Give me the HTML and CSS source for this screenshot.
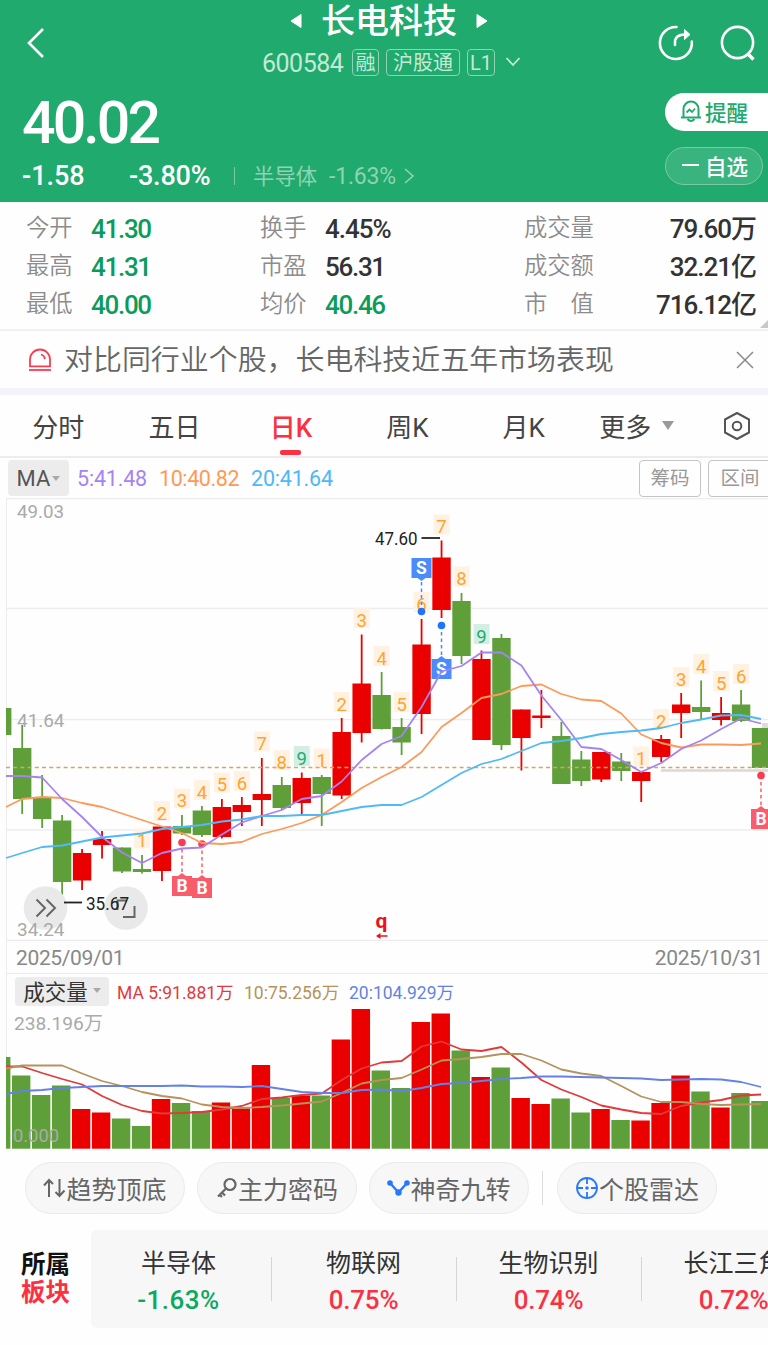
FILE: index.html
```html
<!DOCTYPE html>
<html lang="zh-CN">
<head>
    <meta charset="UTF-8">
    <meta name="viewport" content="width=device-width, initial-scale=1.0">
    <title>长电科技 600584</title>
    <link rel="stylesheet" href="styles.css">
</head>
<body>
    <header class="header">
        <div class="topbar">
            <svg class="back" width="20" height="34" viewBox="0 0 20 34"><path d="M17 3 L3 17 L17 31" fill="none" stroke="#fff" stroke-width="2.6"/></svg>
            <div class="stock">
                <div class="stock-name">
                    <svg width="12" height="16" viewBox="0 0 12 16"><path d="M11 1.5 V14.5 L1 8 Z" fill="#fff" stroke="#fff" stroke-linejoin="round"/></svg>
                    <h1>长电科技</h1>
                    <svg width="12" height="16" viewBox="0 0 12 16"><path d="M1 1.5 V14.5 L11 8 Z" fill="#fff" stroke="#fff" stroke-linejoin="round"/></svg>
                </div>
                <div class="stock-code">
                    <span class="code">600584</span>
                    <span class="tag">融</span>
                    <span class="tag tag-wide">沪股通</span>
                    <span class="tag tag-l1">L1</span>
                    <svg width="16" height="12" viewBox="0 0 16 12"><path d="M1.5 2 L8 9 L14.5 2" fill="none" stroke="#c5e9d7" stroke-width="1.8"/></svg>
                </div>
            </div>
            <svg class="icon-share" width="40" height="40" viewBox="0 0 40 40" fill="none" stroke="#fff" stroke-width="2.6">
                <path d="M20.5 4 A16 16 0 1 0 35.8 18.5" stroke-linecap="round"/>
                <path d="M19 22 V19.5 Q19 11.5 29 11.5" stroke-linecap="round"/>
                <path d="M28.5 6.5 L34 11.5 L28.5 16.5 Z" fill="#fff" stroke-width="1"/>
            </svg>
            <svg class="icon-search" width="40" height="40" viewBox="0 0 40 40" fill="none" stroke="#fff" stroke-width="2.6">
                <circle cx="19.5" cy="19.5" r="15.6"/>
                <path d="M29.5 30.5 L35.5 36.5" stroke-width="3.4"/>
            </svg>
        </div>
        <div class="quote">
            <div>
                <div class="price">40.02</div>
                <div class="change">
                    <span class="diff">-1.58</span>
                    <span class="percent">-3.80%</span>
                    <span class="line"></span>
                    <span class="sector">半导体</span>
                    <span class="sector-rate">-1.63%</span>
                    <svg width="12" height="18" viewBox="0 0 12 18"><path d="M2 2 L10 9 L2 16" fill="none" stroke="#8fd3b3" stroke-width="1.6"/></svg>
                </div>
            </div>
            <div class="actions">
                <a class="btn btn-alert">
                    <svg width="22" height="24" viewBox="0 0 22 24" fill="none" stroke="#20aa6d" stroke-width="2">
                        <path d="M3.5 18 V10 A7.5 7.5 0 0 1 18.5 10 V18"/>
                        <path d="M1 18.5 H21"/>
                        <path d="M7.5 20 Q11 24 14.5 20"/>
                        <path d="M6.5 13.5 L9.5 10.5 L12 13 L15 9.5" stroke-width="1.8"/>
                    </svg>
                    提醒
                </a>
                <a class="btn btn-fav"><span class="minus"></span>自选</a>
            </div>
        </div>
    </header>

    <section class="stats">
        <span class="label">今开</span><span class="value down">41.30</span>
        <span class="label">换手</span><span class="value">4.45%</span>
        <span class="label">成交量</span><span class="value right">79.60万</span>
        <span class="label">最高</span><span class="value down">41.31</span>
        <span class="label">市盈</span><span class="value">56.31</span>
        <span class="label">成交额</span><span class="value right">32.21亿</span>
        <span class="label">最低</span><span class="value down">40.00</span>
        <span class="label">均价</span><span class="value down">40.46</span>
        <span class="label">市　值</span><span class="value right">716.12亿</span>
        <i class="corner"></i>
    </section>

    <section class="notice">
        <svg width="24" height="24" viewBox="0 0 24 24" fill="none" stroke="#fb3c50" stroke-width="1.8">
            <path d="M2 18.3 V11.5 A10 10 0 0 1 22 11.5 V18.3 Z"/>
            <path d="M1 22 H23"/>
            <path d="M13 6.5 Q16.5 7.5 17 11"/>
        </svg>
        <p>对比同行业个股，长电科技近五年市场表现</p>
        <svg class="close" width="18" height="18" viewBox="0 0 18 18"><path d="M1 1 L17 17 M17 1 L1 17" stroke="#888" stroke-width="1.5"/></svg>
    </section>

    <nav class="tabs">
        <a>分时</a>
        <a>五日</a>
        <a class="active">日K</a>
        <a>周K</a>
        <a>月K</a>
        <a>更多<i class="caret"></i></a>
        <svg width="28" height="30" viewBox="0 0 28 30" fill="none" stroke="#555" stroke-width="2">
            <path d="M14 2 L26 8.5 V21.5 L14 28 L2 21.5 V8.5 Z" stroke-linejoin="round"/>
            <circle cx="14" cy="15" r="4.3"/>
        </svg>
    </nav>

    <div class="ma-bar">
        <span class="select">MA<i class="caret small"></i></span>
        <span class="ma5">5:41.48</span>
        <span class="ma10">10:40.82</span>
        <span class="ma20">20:41.64</span>
        <span class="tool">筹码</span>
        <span class="tool last">区间</span>
    </div>
    <svg id="kline" class="chart" width="768" height="443" viewBox="0 497 768 443"></svg>
    <div class="dates"><span>2025/09/01</span><span>2025/10/31</span></div>

    <div class="vol-bar">
        <span class="select">成交量<i class="caret small"></i></span>
        <span class="vol5">MA 5:91.881万</span>
        <span class="vol10">10:75.256万</span>
        <span class="vol20">20:104.929万</span>
    </div>
    <svg id="volume" class="chart" width="768" height="142" viewBox="0 1007 768 142"></svg>

    <div class="tools">
        <a class="pill">
            <svg width="23" height="20" viewBox="0 0 23 20" fill="none" stroke="#666" stroke-width="2"><path d="M6 19 V2 M1 7.5 L6 2 L10 6 M16.5 1 V18 M12.5 14 L16.5 18 L21.5 12.5"/></svg>趋势顶底
        </a>
        <a class="pill">
            <svg width="22" height="22" viewBox="0 0 22 22" fill="none" stroke="#666" stroke-width="2.2"><circle cx="14" cy="7.5" r="5.5"/><path d="M10 11.5 L2 19.5 M6 15.5 L9 18.5 M3 17 L6 20"/></svg>主力密码
        </a>
        <a class="pill">
            <svg width="23" height="20" viewBox="0 0 23 20" fill="none" stroke="#2878ff" stroke-width="2.4"><path d="M3 5 L11.5 14.5 L20 5"/><g fill="#2878ff" stroke="none"><circle cx="3" cy="5" r="2.8"/><circle cx="11.5" cy="14.5" r="3.2"/><circle cx="20" cy="5" r="2.8"/></g></svg>神奇九转
        </a>
        <span class="split"></span>
        <a class="pill">
            <svg width="24" height="24" viewBox="0 0 24 24" fill="none" stroke="#2878ff" stroke-width="1.8"><circle cx="12" cy="12" r="10"/><path d="M12 2 V8 M12 16 V22 M2 12 H8 M16 12 H22"/><circle cx="12" cy="12" r="1.8" fill="#2878ff" stroke="none"/></svg>个股雷达
        </a>
    </div>

    <section class="boards">
        <h2>所属<em>板块</em></h2>
        <div class="board-list">
            <div class="board"><span>半导体</span><b class="green">-1.63%</b></div>
            <div class="board"><span>物联网</span><b>0.75%</b></div>
            <div class="board"><span>生物识别</span><b>0.74%</b></div>
            <div class="board"><span>长江三角</span><b>0.72%</b></div>
        </div>
    </section>

    <script src="chart.js"></script>
</body>
</html>
```

FILE: styles.css
```css
* {
    box-sizing: border-box;
}
body {
    margin: 0;
    width: 768px;
    height: 1345px;
    overflow: hidden;
    background: #fefefe;
    color: #333;
    font-family: Roboto, "Noto Sans CJK SC", sans-serif;
}
i, em {
    font-style: normal;
}
svg {
    flex: none;
}

/* header */
.header {
    height: 202px;
    background: #20aa6d;
    color: #fff;
}
.topbar {
    display: flex;
    height: 84px;
}
.back {
    margin: 26px 0 0 26px;
}
.stock {
    width: 260px;
    margin-left: 216px;
}
.stock-name {
    display: flex;
    align-items: center;
    justify-content: center;
    height: 42px;
    gap: 19px;
    padding-right: 6px;
}
.stock-name h1 {
    margin: 0;
    font-size: 34px;
    font-weight: 500;
    line-height: 44px;
}
.stock-code {
    display: flex;
    align-items: center;
    height: 40px;
    color: #c5e9d7;
}
.code {
    width: 90px;
    padding-top: 3px;
    font-size: 25px;
    letter-spacing: -0.5px;
}
.tag {
    width: 27px;
    height: 27px;
    margin-right: 7px;
    border: 1.5px solid #8fd3b3;
    border-radius: 4px;
    font-size: 20px;
    line-height: 26px;
    text-align: center;
}
.tag-wide {
    width: 74px;
}
.tag-l1 {
    width: 28px;
    margin-right: 10px;
}
.icon-share {
    margin: 23px 0 0 134px;
}
.icon-search {
    margin: 23px 0 0 22px;
}
.quote {
    display: flex;
    justify-content: space-between;
    height: 118px;
}
.price {
    height: 76px;
    padding-left: 22px;
    font-size: 59px;
    font-weight: 500;
    line-height: 78px;
    letter-spacing: -2.9px;
}
.change {
    display: flex;
    align-items: center;
    height: 32px;
    padding-left: 22px;
    font-size: 27px;
    font-weight: 500;
}
.diff {
    width: 107px;
}
.percent {
    width: 105px;
    letter-spacing: -0.2px;
}
.line {
    width: 1px;
    height: 18px;
    margin-right: 18px;
    background: #79caa5;
}
.sector {
    width: 76px;
    padding-bottom: 4px;
    color: #8fd3b3;
    font-size: 21.4px;
    font-weight: 400;
}
.sector-rate {
    width: 74px;
    color: #8fd3b3;
    font-size: 23px;
    font-weight: 400;
    letter-spacing: -0.2px;
}
.actions {
    width: 103px;
    padding-top: 9px;
}
.btn {
    display: flex;
    align-items: center;
    height: 38px;
    padding-bottom: 2px;
    font-size: 21.5px;
    font-weight: 500;
}
.btn-alert {
    padding-left: 15px;
    gap: 3px;
    border-radius: 19px 0 0 19px;
    background: #fff;
    color: #20aa6d;
}
.btn-fav {
    width: 98px;
    margin-top: 16px;
    padding-left: 16px;
    border: 1.5px solid #79caa5;
    border-radius: 19px;
    background: #3ab47e;
}
.minus {
    width: 17px;
    height: 2px;
    margin-right: 6px;
    background: #fff;
}

/* numbers */
.stats {
    position: relative;
    display: grid;
    grid-template-columns: 65px 169px 65px 199px 65px 167px;
    grid-auto-rows: 38px;
    height: 129px;
    padding: 7px 12px 0 26px;
    border-bottom: 2px solid #f1f1f3;
}
.label {
    color: #8c8c8c;
    font-size: 23.3px;
    font-weight: 350;
    white-space: nowrap;
    line-height: 38px;
}
.value {
    font-size: 26px;
    font-weight: 500;
    letter-spacing: -1.3px;
    line-height: 40px;
    white-space: nowrap;
}
.value:nth-child(4) {
    letter-spacing: -1px;
}
.value.right {
    letter-spacing: -1px;
    text-align: right;
}
.down {
    color: #0b9b5a;
}
.corner {
    position: absolute;
    right: 0;
    bottom: 1px;
    border-bottom: 8px solid #c8c8c8;
    border-left: 8px solid transparent;
}

.notice {
    display: flex;
    align-items: center;
    height: 64px;
    padding: 0 14px 0 28px;
    border-bottom: 7px solid #f3f3f9;
}
.notice p {
    margin: 0 auto 0 12px;
    padding-top: 1px;
    color: #666;
    font-size: 28.95px;
    font-weight: 350;
    line-height: 50px;
}

/* tabs */
.tabs {
    display: flex;
    align-items: center;
    height: 63px;
    border-bottom: 2px solid #ececee;
}
.tabs a {
    position: relative;
    display: flex;
    align-items: center;
    justify-content: center;
    width: 116.4px;
    height: 62px;
    padding-bottom: 1px;
    color: #444;
    font-size: 26px;
}
.tabs a.active {
    color: #fb3142;
    font-weight: 500;
}
.tabs a.active::after {
    content: "";
    position: absolute;
    bottom: 2px;
    width: 21px;
    height: 5px;
    border-radius: 2px;
    background: #fb3142;
}
.tabs > svg {
    margin-left: 25px;
}
.tabs a:nth-child(6) {
    padding-right: 7px;
}
.caret {
    margin-left: 11px;
    border: 6.5px solid transparent;
    border-top: 9px solid #999;
    border-bottom: 0;
}
.caret.small {
    margin-left: 2px;
    border-width: 4.5px;
    border-top: 5.5px solid #aaa;
    border-bottom: 0;
}

.ma-bar {
    display: flex;
    align-items: center;
    height: 40px;
    padding-left: 8px;
    font-size: 21.5px;
    white-space: nowrap;
}
.select {
    display: flex;
    align-items: center;
    justify-content: center;
    border-radius: 4px;
    background: #ececec;
    color: #555;
}
.ma-bar .select {
    width: 61px;
    height: 36px;
    margin-right: 8px;
    font-size: 22px;
}
.ma5 {
    width: 82px;
    color: #a584f2;
    letter-spacing: -0.2px;
}
.ma10 {
    width: 92px;
    color: #ff9a55;
    letter-spacing: -0.4px;
}
.ma20 {
    color: #4db8fa;
    letter-spacing: -0.2px;
}
.tool {
    flex: none;
    width: 62px;
    height: 37px;
    margin-left: auto;
    border: 1.5px solid #c4c4c4;
    border-radius: 4px;
    color: #999;
    font-size: 19.5px;
    line-height: 35px;
    text-align: center;
}
.tool.last {
    width: 64px;
    margin: 0 -4px 0 7px;
}

.chart {
    display: block;
}
.dates {
    display: flex;
    justify-content: space-between;
    height: 33px;
    margin-left: 6px;
    padding: 0 5px 0 9px;
    border-left: 1px solid #ececec;
    border-bottom: 1px solid #ececec;
    color: #888;
    font-size: 21px;
    letter-spacing: -0.35px;
    line-height: 34px;
}
.vol-bar {
    display: flex;
    align-items: center;
    height: 34px;
    margin-left: 6px;
    padding-left: 8px;
    border-left: 1px solid #ececec;
    font-size: 17.5px;
    white-space: nowrap;
}
.vol-bar .select {
    width: 94px;
    height: 29px;
    margin-right: 8px;
    padding-bottom: 2px;
    color: #333;
    font-size: 21.5px;
}
.vol-bar .caret {
    margin-left: 5px;
}
.vol5 {
    width: 127px;
    color: #e4393c;
}
.vol10 {
    width: 105px;
    color: #b5935b;
}
.vol20 {
    color: #6482e6;
}

/* bottom */
.tools {
    display: flex;
    height: 80px;
    padding: 12px 0 0 25px;
}
.pill {
    display: flex;
    align-items: center;
    justify-content: center;
    width: 160px;
    height: 52px;
    margin-right: 12px;
    border: 1px solid #ebebeb;
    border-radius: 26px;
    background: #f7f7f7;
    color: #666;
    font-size: 25px;
    white-space: nowrap;
}
.split {
    width: 1px;
    height: 34px;
    margin: 9px 14px 0 1px;
    background: #ddd;
}
.boards {
    display: flex;
    height: 98px;
}
.boards h2 {
    flex: none;
    width: 91px;
    margin: 0;
    padding: 21px 0 0 21px;
    color: #111;
    font-size: 24.5px;
    line-height: 28px;
}
.boards em {
    display: block;
    color: #fb3142;
}
.board-list {
    display: flex;
    flex: none;
    width: 677px;
    overflow: hidden;
    border-radius: 6px 0 0 6px;
    background: #f7f7f7;
}
.board {
    position: relative;
    display: flex;
    flex-direction: column;
    align-items: center;
    flex: none;
    width: 185px;
    padding-top: 15px;
    font-size: 25px;
    line-height: 37px;
    color: #333;
}
.board:first-child {
    width: 180px;
    padding-right: 5px;
}
.board + .board::before {
    content: "";
    position: absolute;
    left: 0;
    top: 27px;
    width: 1px;
    height: 44px;
    background: #d5d5d5;
}
.board b {
    color: #fb3142;
    font-size: 26px;
    font-weight: 500;
    letter-spacing: -0.2px;
}
.board b.green {
    color: #0aa960;
    letter-spacing: 0.5px;
}
```

FILE: chart.js
```js
const NS = "http://www.w3.org/2000/svg";
const RED = "#eb0000";
const GREEN = "#5f9f39";

// high, body top, body bottom, low, color
const candles = [
    [707, 707, 734, 734, "g"], [724, 747, 798, 813, "g"], [774, 797, 818, 827, "g"],
    [814, 819.5, 881, 897, "g"], [848, 852, 879.5, 889, "r"], [830, 838, 844, 857.5, "r"],
    [846.5, 846.5, 870.5, 872, "g"], [854, 868, 871, 872.5, "g"], [825, 825.5, 870, 880, "r"],
    [814, 825, 832.5, 834, "g"], [805, 809.5, 834, 836, "g"], [798, 806, 836, 837.5, "r"],
    [796, 804, 811, 825, "r"], [757, 793, 799, 825, "r"], [776, 784, 807, 809, "g"],
    [771.5, 777, 802, 813, "r"], [774, 776, 793, 825, "g"], [717, 731, 794.5, 798, "r"],
    [633.5, 682.5, 732, 741.5, "r"], [671, 694, 728, 728.5, "g"], [717, 726, 741.5, 754, "g"],
    [618, 643.5, 713, 733, "r"], [539.5, 556.5, 609, 617, "r"], [592, 600, 655, 663, "g"],
    [649.5, 658, 739, 739, "r"], [633, 637, 744, 749, "g"], [708.5, 708.5, 737, 769.5, "r"],
    [689, 714.5, 717, 727, "r"], [721, 735, 783, 783, "g"], [750, 758.5, 780, 785, "g"],
    [751, 751, 778.5, 781, "r"], [752, 760.5, 770, 780, "g"], [771, 771, 780, 801, "r"],
    [734, 738, 756, 761, "r"], [692, 703.5, 712, 737, "r"], [679.5, 706, 711, 718, "g"],
    [696, 712, 719, 724.5, "r"], [689, 703.5, 720, 721, "g"], [727, 727, 767, 767, "g"]
];
const ma5 = [775, 775, 776.5, 798, 816, 836, 851.5, 862, 852, 847.5, 846.5, 833.5, 821.5, 815, 809, 798, 795, 780.5, 759, 743, 735, 706, 670.5, 665, 651.5, 651.5, 664.5, 694.5, 719, 746, 748, 759, 771, 762, 748, 739.5, 728, 717.5, 722.5];
const ma10 = [806, 798, 796, 797, 802, 806, 812.5, 819, 825.5, 832, 842, 843, 841, 833, 828, 822, 814, 801, 787, 776, 766, 751, 726, 712, 697, 693, 685, 683.5, 693, 698.5, 700, 712.5, 733.5, 742, 746.5, 743.5, 743.5, 744, 742.5];
const ma20 = [857, 852, 846, 844.5, 840.5, 836.5, 834.5, 832.5, 828, 826, 824, 820.5, 818.5, 815, 815, 814, 814, 810, 806, 804, 804, 796, 784, 772, 763, 758, 750, 742, 740, 737, 733, 731, 729.5, 727, 722, 718.5, 714.5, 714, 718];

// index, center y, label
const counts = [
    [7, 837.5, 1], [8, 810, 2], [9, 797.5, 3], [10, 789, 4], [11, 781.5, 5], [12, 780, 6], [13, 740.5, 7], [14, 759, 8], [15, 755, 9],
    [16, 757.5, 1], [17, 701, 2], [18, 617, 3], [19, 655, 4], [20, 701, 5], [21, 601, 6], [22, 523.5, 7], [23, 575.5, 8], [24, 633, 9],
    [32, 755.5, 1], [33, 718, 2], [34, 676, 3], [35, 663, 4], [36, 680, 5], [37, 673, 6]
];
// letter, x, box top, dot y
const trades = [["B", 182, 875, 841.5], ["B", 202, 877, 843], ["B", 761, 808, 774.5], ["S", 421.5, 557, 610.5], ["S", 441.5, 658, 624.5]];

const volumes = [1056, 1074.5, 1094, 1084.5, 1108, 1111.5, 1117.5, 1125, 1098, 1102, 1110, 1101.5, 1107.5, 1064, 1097, 1094.5, 1094.5, 1038.5, 1008, 1069.5, 1087, 1021, 1012.5, 1049.5, 1076, 1066.5, 1097, 1103, 1097.5, 1111.5, 1108, 1119, 1119.5, 1102, 1074.5, 1090.5, 1106.5, 1092, 1100];
const vma5 = [1065.5, 1065.5, 1072, 1078, 1083.5, 1095, 1104, 1110, 1112.5, 1112, 1111, 1108.5, 1105, 1098, 1096.5, 1094, 1092.5, 1079, 1067.5, 1061.5, 1060, 1045.5, 1040.5, 1048.5, 1050, 1046, 1061.5, 1079, 1088.5, 1096, 1104.5, 1108.5, 1112, 1113, 1105, 1101.5, 1099, 1094.5, 1093.5];
const vma10 = [1067.5, 1064.5, 1064.5, 1064.5, 1072.5, 1080, 1085, 1091, 1095, 1097.5, 1103.5, 1106, 1107, 1106, 1104.5, 1102.5, 1100.5, 1092, 1082.5, 1079, 1077, 1068.5, 1059.5, 1058, 1056, 1053, 1053, 1059.5, 1068.5, 1072.5, 1075, 1085, 1095.5, 1101, 1101, 1103, 1104, 1103.5, 1103];
const vma20 = [1093, 1090, 1089, 1087, 1086, 1085, 1085, 1085, 1085, 1084.5, 1085.5, 1085.5, 1086, 1085, 1088, 1091, 1092, 1092, 1089, 1088.5, 1090, 1087, 1083, 1082, 1080, 1078, 1077, 1075.5, 1075.5, 1076, 1076.5, 1077, 1077.5, 1079, 1078.5, 1078, 1078.5, 1081, 1086];

function add(parent, tag, attrs, text) {
    const el = document.createElementNS(NS, tag);
    for (const key in attrs) el.setAttribute(key, attrs[key]);
    if (text !== undefined) el.textContent = text;
    parent.appendChild(el);
    return el;
}
function rect(svg, x, y, w, h, fill) {
    return add(svg, "rect", { x: x, y: y, width: w, height: h, fill: fill });
}
function line(svg, x1, y1, x2, y2, color, width, dash) {
    return add(svg, "line", { x1, y1, x2, y2, stroke: color, "stroke-width": width, "stroke-dasharray": dash || "none" });
}
function label(svg, x, y, text, color, size, width) {
    const attrs = { x: x, y: y, fill: color, "font-size": size };
    if (width) {
        attrs.textLength = width;
        attrs.lengthAdjust = "spacingAndGlyphs";
    }
    return add(svg, "text", attrs, text);
}
const cx = i => 2.2 + 19.97 * i;

function curve(svg, values, color) {
    const points = values.map((y, i) => (i === 0 ? 6 : cx(i)) + "," + y).join(" ");
    add(svg, "polyline", { points: points, fill: "none", stroke: color, "stroke-width": 1.8, "stroke-linejoin": "round" });
}

function drawKline() {
    const svg = document.getElementById("kline");
    [497.5, 607.5, 718.5, 829, 939.5].forEach(y => line(svg, 6, y, 768, y, "#ededed", 1.3));
    line(svg, 6.5, 497, 6.5, 940, "#ececec", 1);
    line(svg, 661, 769.5, 768, 769.5, "#d8d8d8", 2.5);
    rect(svg, 762, 722, 6, 5, "#dcdcdc");

    candles.forEach((c, i) => {
        const color = c[4] === "r" ? RED : GREEN;
        const left = Math.max(cx(i) - 9.2, 6);
        rect(svg, left, c[1], cx(i) + 9.2 - left, c[2] - c[1], color);
        if (i > 0) line(svg, cx(i), c[0], cx(i), c[3], color, 1.8);
    });

    counts.forEach(c => {
        const nine = c[2] === 9;
        add(svg, "rect", { x: cx(c[0]) - 8, y: c[1] - 10, width: 16, height: 20, fill: nine ? "#d3efe3" : "#fff2e3" });
        const t = label(svg, cx(c[0]), c[1] + 8.5, c[2], nine ? "#20ae71" : "#ffa42e", 18.5);
        t.setAttribute("text-anchor", "middle");
    });

    label(svg, 17, 517, "49.03", "#aaa", 19, 47);
    label(svg, 17, 726, "41.64", "#aaa", 19, 47.5);

    line(svg, 6, 766.5, 768, 766.5, "#d5a565", 1.5, "4 3.2");

    // expand buttons
    [45.5, 126].forEach(x => add(svg, "circle", { cx: x, cy: 907, r: 21.8, fill: "#e9e9e9" }));
    label(svg, 17, 935, "34.24", "#aaa", 19, 47.5);
    add(svg, "path", { d: "M36.5 898.5 L45 907 L36.5 915.5 M46.5 898.5 L55 907 L46.5 915.5 M117.5 909 V899.5 H127 M134.5 905 V916 H123", fill: "none", stroke: "#666", "stroke-width": 2 });
    line(svg, 64, 901.5, 82, 901.5, "#222", 1.8);
    label(svg, 86, 909, "35.67", "#222", 18.5, 43);
    line(svg, 421.5, 537, 440, 537, "#222", 1.8);
    label(svg, 375, 544, "47.60", "#222", 18.5, 42.5);

    trades.forEach(t => {
        const [name, x, top, dot] = t;
        const buy = name === "B";
        const above = top < dot;
        const edge = above ? top + 20 : top;
        line(svg, x, dot, x, edge, buy ? "#f95d6b" : "#4a8cfb", 1.5, "3.5 3");
        add(svg, "circle", { cx: x, cy: dot, r: 3.8, fill: buy ? "#fb3c50" : "#1f74ff" });
        const tip = above ? edge + 3 : edge - 3;
        add(svg, "path", { d: `M${x - 4} ${edge} L${x} ${tip} L${x + 4} ${edge} Z`, fill: buy ? "#f95d6b" : "#4a8cfb" });
        rect(svg, x - 10, top, 20, 20, buy ? "#f95d6b" : "#4a8cfb");
        const text = label(svg, x, top + 16, name, "#fff", 17.5);
        text.setAttribute("text-anchor", "middle");
        text.setAttribute("font-weight", "700");
    });

    curve(svg, ma10, "#fb9b5b");
    curve(svg, ma5, "#a584f2");
    curve(svg, ma20, "#50b9f8");

    const q = label(svg, 375.5, 927, "q", "#e8131b", 21);
    q.setAttribute("font-weight", "700");
    line(svg, 379, 935, 387.5, 935, "#e8131b", 1.5);
    add(svg, "path", { d: "M376 935 L380.5 932 V938 Z", fill: "#e8131b" });
}

function drawVolume() {
    const svg = document.getElementById("volume");
    line(svg, 6.5, 1007, 6.5, 1148, "#ececec", 1);
    volumes.forEach((y, i) => {
        const x = 1.2 + 19.98 * i;
        const left = Math.max(x - 9.2, 6);
        rect(svg, left, y, x + 9.2 - left, 1147.7 - y, candles[i][4] === "r" ? RED : GREEN);
    });
    label(svg, 14, 1029, "238.196万", "#aaa", 19, 89);
    label(svg, 13, 1141, "0.000", "#aaa", 19, 46);
    curve(svg, vma5, "#e03a3a");
    curve(svg, vma10, "#b5935b");
    curve(svg, vma20, "#6482e6");
}

drawKline();
drawVolume();
```
